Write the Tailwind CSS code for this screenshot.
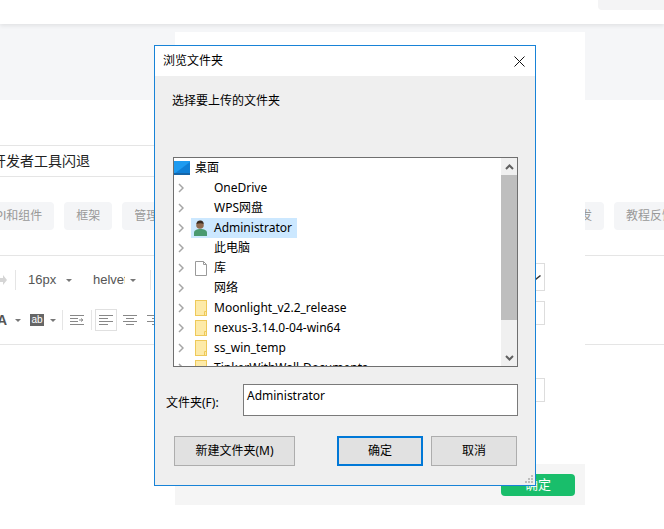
<!DOCTYPE html>
<html lang="zh-CN">
<head>
    <meta charset="UTF-8">
    <meta name="viewport" content="width=device-width, initial-scale=1.0">
    <title>浏览文件夹</title>
    <script src="https://cdn.jsdelivr.net/npm/@tailwindcss/browser@4"></script>
</head>
<body class="bg-white">
<div class="relative w-[664px] h-[529px] overflow-hidden bg-white font-['Liberation_Sans','Noto_Sans_CJK_SC',sans-serif] text-xs text-[#333]">

    <!-- page behind -->
    <div class="h-6 bg-white shadow-[0_2px_4px_rgba(0,0,0,0.08)] flex justify-end relative">
        <div class="w-[66px] h-[10px] bg-[#f4f4f5] rounded-bl"></div>
    </div>
    <div class="h-[76px] bg-[#f5f6f8]"></div>

    <div class="mt-[45px] w-[420px] h-[32px] border-y border-[#e5e5e5] flex items-center text-sm text-[#222] -ml-[8px] pl-0">开发者工具闪退</div>

    <div class="mt-[25px] flex justify-between">
        <div class="flex gap-[10px] -ml-[25px] text-[#999]">
            <span class="h-7 px-3 flex items-center bg-[#f4f5f7] rounded-sm">API和组件</span>
            <span class="h-7 px-3 flex items-center bg-[#f4f5f7] rounded-sm">框架</span>
            <span class="h-7 px-3 flex items-center bg-[#f4f5f7] rounded-sm">管理</span>
        </div>
        <div class="flex gap-[10px] -mr-[22px] text-[#999]">
            <span class="h-7 px-3 flex items-center bg-[#f4f5f7] rounded-sm">开发</span>
            <span class="h-7 px-3 flex items-center bg-[#f4f5f7] rounded-sm">教程反馈</span>
        </div>
    </div>

    <!-- editor toolbar -->
    <div class="mt-[25px] h-[90px] border-y border-[#e5e5e5] text-[#555]">
        <div class="h-[28px] mt-[10px] flex items-center">
            <svg width="7" height="10" viewBox="0 0 7 10" class="mr-[8px]"><path d="M0 3h3V0l4 5-4 5V7H0z" fill="#d5d5d5"/></svg>
            <span class="w-px h-5 bg-[#e5e5e5]"></span>
            <span class="ml-3 text-[13px] w-[31px]">16px</span>
            <span class="ml-[7px] w-0 h-0 border-x-[3px] border-x-transparent border-t-[3px] border-t-[#777]"></span>
            <span class="ml-[21px] text-[13px] w-[32px] overflow-hidden">helvetica</span>
            <span class="ml-[5px] w-0 h-0 border-x-[3px] border-x-transparent border-t-[3px] border-t-[#777]"></span>
            <span class="ml-[14px] w-px h-5 bg-[#e5e5e5]"></span>
        </div>
        <div class="h-[28px] mt-[12px] flex items-center">
            <span class="text-sm font-bold w-[7px] overflow-hidden flex justify-end">A</span>
            <span class="ml-[8px] w-0 h-0 border-x-[3px] border-x-transparent border-t-[3px] border-t-[#777]"></span>
            <span class="ml-[9px] w-[14px] h-[12px] bg-[#666] text-white text-[10px] leading-[12px] text-center">ab</span>
            <span class="ml-[6px] w-0 h-0 border-x-[3px] border-x-transparent border-t-[3px] border-t-[#777]"></span>
            <span class="ml-[6px] w-px h-5 bg-[#e5e5e5]"></span>
            <svg width="14" height="10" viewBox="0 0 14 10" class="ml-[7px]"><path d="M0 .5h14M0 3.5h8M0 6.5h8M0 9.5h14" stroke="#888"/><path d="M9 5h3M11 3.5 13 5l-2 1.500" stroke="#888" fill="none"/></svg>
            <span class="ml-[7px] w-px h-5 bg-[#e5e5e5]"></span>
            <span class="ml-[3px] w-[22px] h-[22px] border border-[#e0e0e0] flex items-center justify-center">
                <svg width="14" height="10" viewBox="0 0 14 10"><path d="M0 .5h14M0 3.500h9M0 6.500h14M0 9.500h9" stroke="#888"/></svg>
            </span>
            <svg width="14" height="10" viewBox="0 0 14 10" class="ml-[6px]"><path d="M0 .5h14M3 3.500h8M0 6.500h14M3 9.500h8" stroke="#888"/></svg>
            <svg width="14" height="10" viewBox="0 0 14 10" class="ml-[10px]"><path d="M0 .5h14M5 3.500h9M0 6.500h14M5 9.500h9" stroke="#888"/></svg>
        </div>
    </div>

    <!-- web modal over the page -->
    <div class="absolute left-[175px] top-8 w-[410px] h-[473px] flex flex-col bg-white">
        <div class="flex-1 relative">
            <div class="absolute right-[40px] top-[231px] w-[20px] h-[28px] border border-[#ddd] flex items-center justify-end pr-[3px]">
                <svg width="6" height="5" viewBox="0 0 6 5"><path d="M0 4 1 5 6 1 5 0z" fill="#333"/></svg>
            </div>
            <div class="absolute right-[40px] top-[269px] w-[20px] h-[24px] border border-[#ddd]"></div>
            <div class="absolute right-[40px] top-[346px] w-[20px] h-[24px] border border-[#ddd]"></div>
        </div>
        <div class="h-[41px] bg-[#f5f5f5] flex items-center justify-end pr-[10px] pt-px">
            <button class="w-[74px] h-[22px] rounded-sm bg-[#19be6b] text-white text-[13px]">确定</button>
        </div>
    </div>

    <!-- windows folder dialog -->
    <div class="absolute left-[154px] top-[45px] w-[382px] h-[441px] border border-[#1883d7] bg-[#efefef] text-black flex flex-col font-['Noto_Sans','Noto_Sans_CJK_SC',sans-serif]">
        <div class="h-[30px] shrink-0 bg-white flex items-center justify-between pl-2 pr-[10px]">
            <span>浏览文件夹</span>
            <svg width="11" height="11" viewBox="0 0 11 11"><path d="M.5.500l10 10M10.500.500l-10 10" stroke="#111" fill="none"/></svg>
        </div>
        <div class="ml-[17px] mt-[16px] h-[18px] leading-[18px]">选择要上传的文件夹</div>

        <div class="ml-[18px] mt-[47px] w-[345px] h-[210px] shrink-0 border border-[#6f6f6f] bg-white flex overflow-hidden">
            <div class="flex-1 min-w-0 h-[208px] overflow-hidden">
                <div class="h-5 flex items-center">
                    <svg width="16" height="14" viewBox="0 0 16 14"><rect x="0" y="0" width="16" height="13" fill="#1e9bf0"/><path d="M0 13 16 1v12z" fill="#0f7fd6"/><rect x="0" y="12" width="16" height="2" fill="#1565a8"/></svg>
                    <span class="ml-[5px]">桌面</span>
                </div>

                <div class="h-5 flex items-center pl-[4px]">
                    <svg width="6" height="10" viewBox="0 0 6 10"><path d="M1 1l4 4-4 4" stroke="#a6a6a6" stroke-width="1.500" fill="none"/></svg>
                    <span class="ml-[30px]">OneDrive</span>
                </div>
                <div class="h-5 flex items-center pl-[4px]">
                    <svg width="6" height="10" viewBox="0 0 6 10"><path d="M1 1l4 4-4 4" stroke="#a6a6a6" stroke-width="1.500" fill="none"/></svg>
                    <span class="ml-[30px]">WPS网盘</span>
                </div>
                <div class="h-5 flex items-center pl-[4px]">
                    <svg width="6" height="10" viewBox="0 0 6 10"><path d="M1 1l4 4-4 4" stroke="#a6a6a6" stroke-width="1.500" fill="none"/></svg>
                    <span class="ml-[7px] h-5 w-[106px] bg-[#cce8ff] flex items-center pl-[3px]">
                        <svg width="13" height="16" viewBox="0 0 13 16"><path d="M0 16v-3c0-3 3-4 6.500-4s6.500 1 6.500 4v3z" fill="#4a9a70"/><circle cx="6" cy="5" r="3.800" fill="#8f6a50"/><path d="M2.500 4C2.500 1 5 0 7 .5s3 2 2.500 3.500C8 3 5 3 2.500 4z" fill="#3a2c22"/></svg>
                        <span class="ml-[7px]">Administrator</span>
                    </span>
                </div>
                <div class="h-5 flex items-center pl-[4px]">
                    <svg width="6" height="10" viewBox="0 0 6 10"><path d="M1 1l4 4-4 4" stroke="#a6a6a6" stroke-width="1.500" fill="none"/></svg>
                    <span class="ml-[30px]">此电脑</span>
                </div>
                <div class="h-5 flex items-center pl-[4px]">
                    <svg width="6" height="10" viewBox="0 0 6 10"><path d="M1 1l4 4-4 4" stroke="#a6a6a6" stroke-width="1.500" fill="none"/></svg>
                    <svg width="12" height="15" viewBox="0 0 12 15" class="ml-[11px]"><path d="M.5.500h8l3 3v11H.500z" fill="#fff" stroke="#9a9a9a"/><path d="M8.500.500v3h3" fill="none" stroke="#9a9a9a"/></svg>
                    <span class="ml-[7px]">库</span>
                </div>
                <div class="h-5 flex items-center pl-[4px]">
                    <svg width="6" height="10" viewBox="0 0 6 10"><path d="M1 1l4 4-4 4" stroke="#a6a6a6" stroke-width="1.500" fill="none"/></svg>
                    <span class="ml-[30px]">网络</span>
                </div>
                <div class="h-5 flex items-center pl-[4px]">
                    <svg width="6" height="10" viewBox="0 0 6 10"><path d="M1 1l4 4-4 4" stroke="#a6a6a6" stroke-width="1.500" fill="none"/></svg>
                    <svg width="12" height="16" viewBox="0 0 12 16" class="ml-[11px]"><rect x=".5" y=".5" width="11" height="15" fill="#fdeaa8" stroke="#eec95a"/><path d="M9.500 15.500v-4h2" fill="none" stroke="#eec95a"/></svg>
                    <span class="ml-[7px]">Moonlight_v2.2_release</span>
                </div>
                <div class="h-5 flex items-center pl-[4px]">
                    <svg width="6" height="10" viewBox="0 0 6 10"><path d="M1 1l4 4-4 4" stroke="#a6a6a6" stroke-width="1.500" fill="none"/></svg>
                    <svg width="12" height="16" viewBox="0 0 12 16" class="ml-[11px]"><rect x=".5" y=".5" width="11" height="15" fill="#fdeaa8" stroke="#eec95a"/><path d="M9.500 15.500v-4h2" fill="none" stroke="#eec95a"/></svg>
                    <span class="ml-[7px]">nexus-3.14.0-04-win64</span>
                </div>
                <div class="h-5 flex items-center pl-[4px]">
                    <svg width="6" height="10" viewBox="0 0 6 10"><path d="M1 1l4 4-4 4" stroke="#a6a6a6" stroke-width="1.500" fill="none"/></svg>
                    <svg width="12" height="16" viewBox="0 0 12 16" class="ml-[11px]"><rect x=".5" y=".5" width="11" height="15" fill="#fdeaa8" stroke="#eec95a"/><path d="M9.500 15.500v-4h2" fill="none" stroke="#eec95a"/></svg>
                    <span class="ml-[7px]">ss_win_temp</span>
                </div>
                <div class="h-5 flex items-center pl-[4px]">
                    <svg width="6" height="10" viewBox="0 0 6 10"><path d="M1 1l4 4-4 4" stroke="#a6a6a6" stroke-width="1.500" fill="none"/></svg>
                    <svg width="12" height="16" viewBox="0 0 12 16" class="ml-[11px]"><rect x=".5" y=".5" width="11" height="15" fill="#fdeaa8" stroke="#eec95a"/></svg>
                    <span class="ml-[7px]">TinkerWithWall-Documents</span>
                </div>
            </div>
            <!-- scrollbar -->
            <div class="w-[16px] shrink-0 bg-[#f0f0f0] flex flex-col">
                <div class="h-[17px] flex items-center justify-center">
                    <svg width="9" height="6" viewBox="0 0 9 6"><path d="M1 5l3.500-3.500L8 5" stroke="#606060" stroke-width="2" fill="none"/></svg>
                </div>
                <div class="h-[145px] bg-[#bebebe]"></div>
                <div class="flex-1"></div>
                <div class="h-[17px] flex items-center justify-center">
                    <svg width="9" height="6" viewBox="0 0 9 6"><path d="M1 1l3.500 3.500L8 1" stroke="#606060" stroke-width="2" fill="none"/></svg>
                </div>
            </div>
        </div>

        <div class="ml-[11px] mt-[17px] flex">
            <span class="w-[77px] mt-[10px] h-[18px] leading-[18px]">文件夹(F):</span>
            <div class="w-[275px] h-[32px] border border-[#7a7a7a] bg-white pl-[3px] leading-[22px]">Administrator</div>
        </div>

        <div class="ml-[19px] mt-[20px] flex">
            <button class="w-[121px] h-[30px] bg-[#e1e1e1] border border-[#adadad]">新建文件夹(M)</button>
            <button class="ml-[42px] w-[86px] h-[30px] bg-[#e1e1e1] border-2 border-[#0078d7]">确定</button>
            <button class="ml-[8px] w-[86px] h-[30px] bg-[#e1e1e1] border border-[#adadad]">取消</button>
        </div>

        <!-- resize grip -->
        <svg width="9" height="9" viewBox="0 0 9 9" class="absolute right-px bottom-px"><path d="M6 0h2v2H6zM3 3h2v2H3zM6 3h2v2H6zM0 6h2v2H0zM3 6h2v2H3zM6 6h2v2H6z" fill="#bdbdbd"/></svg>
    </div>
</div>
</body>
</html>
